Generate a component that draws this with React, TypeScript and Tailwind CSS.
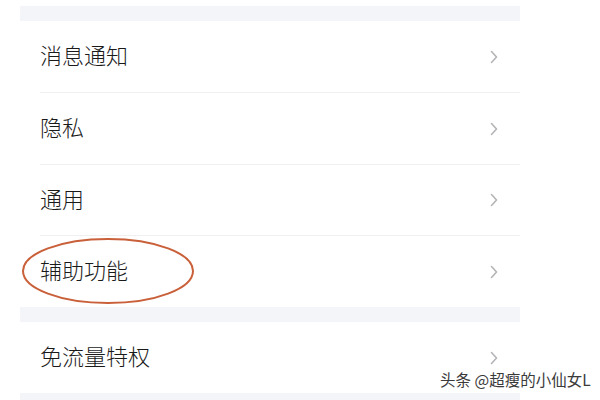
import React from "react";

const font = { fontFamily: '"Noto Sans CJK SC", "Noto Sans", sans-serif' };

function Chevron() {
  return (
    <svg width="8" height="14" viewBox="0 0 8 14" fill="none">
      <path d="M1.5 1.5L6.5 7L1.5 12.5" stroke="#b4b4b8" strokeWidth="1.6" strokeLinecap="round" strokeLinejoin="round" />
    </svg>
  );
}

function Row({ label, tall = false, divider = true }: { label: string; tall?: boolean; divider?: boolean }) {
  return (
    <div className="pl-5">
      <div
        className={`${tall ? "h-[72px]" : "h-[71px]"} flex items-center justify-between pr-[22px] ${divider ? "border-b border-[#f0f0f2]" : ""}`}
      >
        <span className="text-[22px] font-light text-[#1a1a1a] leading-none pb-[5px]">{label}</span>
        <Chevron />
      </div>
    </div>
  );
}

export default function App() {
  return (
    <div className="w-[600px] h-[400px] bg-white overflow-hidden relative" style={font}>
      <div className="pt-[6px] w-[520px] pl-5">
        <div className="h-[15px] bg-[#f4f5f8]" />
        <Row label="消息通知" tall />
        <Row label="隐私" tall />
        <Row label="通用" />
        <Row label="辅助功能" divider={false} />
        <div className="h-[15px] bg-[#f4f5f8]" />
        <Row label="免流量特权" divider={false} />
        <div className="h-[10px] bg-[#f4f5f8]" />
      </div>

      {/* hand-drawn highlight */}
      <svg className="absolute left-[20px] top-[236px]" width="178" height="70" viewBox="0 0 178 70" fill="none">
        <ellipse cx="88" cy="35" rx="85" ry="32" stroke="#c9603a" strokeWidth="2" />
      </svg>

      {/* watermark */}
      <div
        className="absolute left-[440px] top-[368px] text-[15.5px] text-[#3a3a3a] whitespace-nowrap"
        style={{ textShadow: "0 0 2px #fff, 0 0 2px #fff" }}
      >
        头条 @超瘦的小仙女L
      </div>
    </div>
  );
}
